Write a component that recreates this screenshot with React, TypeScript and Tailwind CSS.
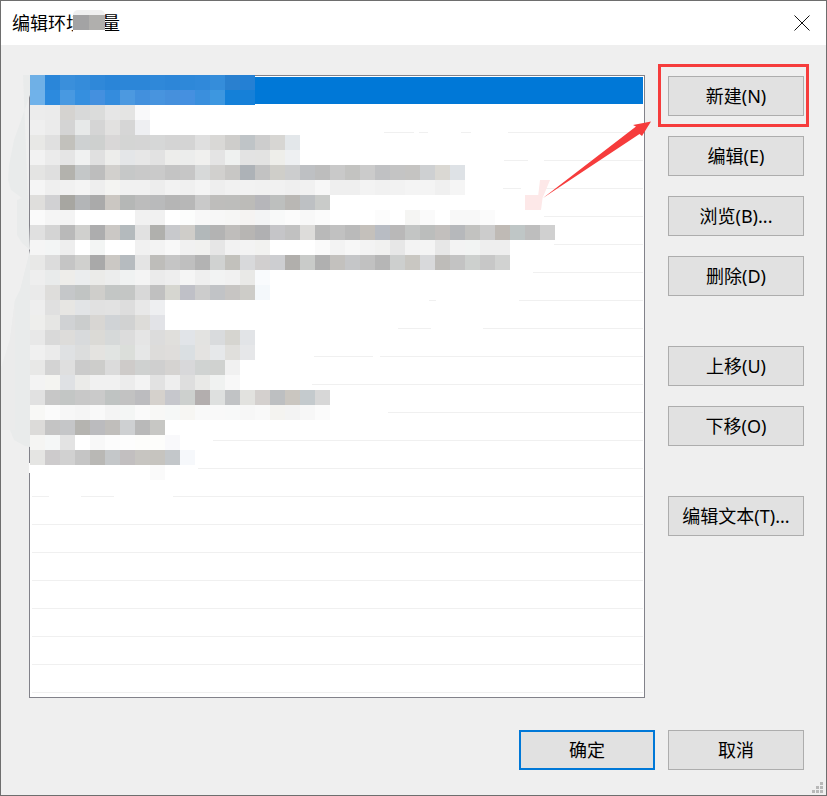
const FONT = "[font-family:'Noto_Sans','Noto_Sans_CJK_SC',sans-serif]"

// blurred-out list contents: 15px tiles starting at x=30, y=75
const mosaic: string[][] = [
  ["#6fb0e6","#2a86d9","#3a8fdb","#358cda","#2f88d9","#2a85d8","#2c86d8","#2c86d8","#2f88d9","#2d86d8","#2e88d9","#3089da","#358dda","#2a80cf","#2480d4"],
  ["#70b2ea","#2c8ade","#4899e1","#358fdf","#4490df","#348cdd","#4c99e0","#4290dd","#4894de","#4690dc","#4590e0","#3a8fdd","#3d97e0","#1480d8","#1680d8"],
  ["#ececec","#ebebeb","#d5d3d0","#d8d9d9","#dbdcdb","#e6e6e6","#e4e4e3","#f9f9fa"],
  ["#efefef","#ebebeb","#d4d4d4","#e7e9e9","#d5d5d5","#e2e1e0","#d6d6d6","#eeeff2"],
  ["#e8e8e6","#e0e0e0","#c2c1bc","#ced1d2","#ced0cf","#d9d7d7","#d4d5d4","#d5d5d5","#d6d7d7","#d4d4d4","#d4d4d4","#dfdfdf","#d9d8d6","#cecdcb","#bfc4c7","#cdcdcd","#d7d6d3","#e3e7ea"],
  ["#f2f2f2","#ebebeb","#e5e5e5","#f0f1f1","#e0e0e0","#ededeb","#e4e6e8","#e7e7e7","#e2e2e2","#ededeb","#ecedec","#f0f0ee","#e4e4e4","#eff1f0","#e3e3e3","#e3e3e2","#eeeeea","#eef0f2"],
  ["#e4e4e3","#dfdfdf","#b3b2ad","#c4c7c8","#bdbdbd","#d2d0cd","#c6c8c8","#c9c9c9","#cacaca","#c4c4c4","#c6c6c6","#d7d9d9","#d1d0ce","#c8c7c5","#adb2b7","#c2c2c2","#cfcec9","#cccdce","#bec0c3","#bdbdbd","#c9c9c9","#c3c3c1","#cbcbcb","#c0c1c3","#c4c4c4","#c5c4c2","#ced0d2","#dad8d3","#dee2e6"],
  ["#f5f5f5","#efefef","#f1f1f1","#f4f4f4","#eeeeee","#f4f4f2","#f1f1f1","#f1f1f1","#ededed","#f2f2f2","#f0f0f0","#f4f4f4","#eeeeee","#f1f1f1","#f2f2f2","#f1f1f1","#f1f1f1","#efefef","#f1f1f1","#f7f7f7","#efefef","#efefef","#f3f3f3","#f1f1f1","#f2f2f2","#f4f4f4","#f4f4f4","#f0f0f0","#f5f5f5"],
  ["#dfdedc","#d1d1d3","#a7a6a1","#b3b5b7","#aaaaaa","#cbc7c2","#b5b7b6","#bcbcbc","#b9babb","#b5b5b5","#b7b7b7","#c9c9c9","#bebdbb","#bdbdbb","#bcbbb8","#b6b6ba","#bdbfbe","#b9b7b4","#bdc0c3","#c9cbc9"],
  ["#fafafa","#f5f5f5","#f4f4f4","#ffffff","#ffffff","#ffffff","#ffffff","#f1f1f1","#f1f1f1","#ffffff","#fcfdfc","#f8f8f8","#f7f7f7","#f6f6f5","#f5f3f2","#f3f4f5","#f8f9f9","#fbfbfb","#f8f8f8","#fbfbfb","#ffffff","#ffffff","#ffffff","#fcfcfc","#ffffff","#f5f5f3","#fafafa","#ffffff","#f8f8f8","#f8f8f8","#fbfbfb"],
  ["#e0e0e0","#d4d4d4","#b9b9b9","#d0d0ce","#adadae","#cbc8c5","#b4babd","#e1e1e1","#b0b0ad","#c8c9cc","#cfcdc9","#b2b8ba","#b3b3b3","#bfbdbb","#b7b5b3","#b0b0b2","#c5c5c8","#c1c1c1","#dddcda","#b9b9b9","#c1c1c1","#bababa","#c4c0bb","#b8bcc3","#b9b8b8","#c3c5c4","#bbbdbc","#c2bfbd","#b6b8bb","#c2c2c0","#cccccc","#bfbab5","#bfc6c6","#bebebe","#d0d0d0"],
  ["#f5f5f5","#f3f5f5","#eeeeee","#ffffff","#f3f5f4","#ffffff","#ffffff","#f1f1f1","#f3f3f3","#f8f8f8","#f1f1f1","#f1f1ef","#e6e6e6","#f2f2f2","#f3f3f3","#f2f2f0","#ffffff","#ffffff","#ffffff","#fafafa","#f3f3f3","#f7f7f7","#f3f3f3","#f1f1f0","#e7e7e7","#f3f3f3","#f4f4f4","#e7e7e7","#f3f3f3","#f2f4f3","#eeeeee","#eeeeee"],
  ["#e8e8e7","#dcdcdc","#c5c5c5","#d0d0ce","#a9a9a9","#cbc8c4","#b6bbbf","#e4e4e4","#bebdba","#c5c5c5","#bfbfbf","#b3b3b3","#d0d2d1","#c2c1bc","#d8d9db","#d1cfcf","#cdced1","#b1afac","#c9cbc9","#b0b0b0","#c3c1be","#c5c6c8","#c1c1c1","#b6b6b6","#cdcfce","#c9c7c2","#d8d9db","#bebcb9","#c3c3c3","#cdd0ce","#c7c7c7","#d1d2d1"],
  ["#eeeeee","#e9ebeb","#eeedea","#ebedee","#ebebe9","#eceded","#f0f2f2","#f4f4f4","#ebebeb","#eeeeee","#f5f5f5","#efefef","#f2f3f3","#f1f1f1","#e9e9e7","#f9fbfd"],
  ["#eaeaea","#dedddb","#c5c7c9","#c1c4c3","#cfcecb","#c3c6c5","#c4c6c5","#d8d8d8","#c0c0c0","#d6d6d0","#bfc0c7","#cccccc","#c1c3c6","#c7c5c3","#cdccc8","#f4f8fb"],
  ["#eeeeee","#e0e0e0","#e7e6e3","#e2e4e6","#e1e1e1","#e2e2e2","#dddddd","#e8e8e8","#eeeff1"],
  ["#eeeeec","#e6e6e4","#d0d2d4","#cbcdcd","#d8d6d3","#d0d3d6","#d1d2d2","#dddcd9","#e2e3e7"],
  ["#e8e8e8","#d9d9d9","#dddcda","#d8dadc","#dbdad6","#d6d9d9","#dcdcdc","#e5e5e5","#dcdcdc","#e0dfdc","#e1e4e8","#e3e3e1","#d9dbdd","#d6d5d0","#e2e4e7"],
  ["#f0f0f0","#ebebeb","#dfe1e3","#dcdddd","#e4e3e0","#e1e4e2","#dbdeda","#e6e7e7","#dddcda","#dfdddb","#dadfe2","#e4e3e1","#e6e8ea","#e0dfdc","#e6e7e9"],
  ["#e8e8e7","#d3d3d3","#dfdfdf","#cbcbcb","#cdcdcb","#dbdbdb","#cecbc9","#cfd1d0","#cfcfcf","#d5d3d1","#d8d8da","#d0d3d2","#d0d2d0","#f1f1f1"],
  ["#f3f3f3","#f4f4f1","#dfe1e4","#ebebe9","#f1f1f1","#f1f1f1","#ececec","#f3f3f3","#e2e2e2","#eeeeee","#dedede","#e9e9e7","#f0f2f1","#f8f8f8"],
  ["#e1e1e1","#c7c7c7","#c3c6c5","#c8c8c8","#cacaca","#bfc3c2","#c2c2c2","#bcbcbf","#d5d1cc","#c6c7cc","#cdd0ce","#b3aeae","#dee0df","#c1c3c5","#e2e2df","#d4d0ce","#bdbfc1","#cac6c0","#c4cacd","#d7d7d7"],
  ["#f8f8f6","#fbfbfb","#f7f7f7","#f5f5f5","#f9f9f9","#f4f4f4","#f4f6f5","#fafafa","#f8f8f6","#f6f8f7","#f7f6f3","#f9f9f9","#f9f9f9","#f8f9f9","#f7f7f7","#f9f9f9","#f4f3f0","#f3f3f3","#f7f7f7","#fbfbfb"],
  ["#dcdbd9","#c4c4c4","#c5c6c8","#b5b4b0","#bbbbbe","#c0bebb","#ced0d2","#b9b9b9","#c7c7c4"],
  ["#f5f5f3","#f5f7f7","#e3e3e3","#ffffff","#f8f8f8","#fcfcfc","#fdfdfd","#fdfdfb","#fdfdfb","#f9f9fb"],
  ["#e5e5e3","#cdcbcc","#d1d1d1","#c5c5c5","#b9b8b5","#c4c7c9","#c2bfc0","#c7c5c1","#c6c4bf","#c3c7ca","#f6f8fb"],
  ["#ffffff","#ffffff","#ffffff","#ffffff","#ffffff","#ffffff","#ffffff","#ffffff","#fafafa"],
]

// visible parts of each row's separator, the rest got painted over in the screenshot
const lines: number[][][] = [
  [[383, 413], [418, 427], [460, 470], [507, 643]],
  [[503, 527], [543, 643]],
  [[502, 520], [543, 643]],
  [[543, 643]],
  [[553, 643]],
  [[532, 643]],
  [[428, 435], [518, 643]],
  [[397, 430], [482, 643]],
  [[313, 372], [379, 643]],
  [[311, 643]],
  [[387, 643]],
  [[212, 643]],
  [[197, 643]],
  [[31, 48], [80, 113], [172, 643]],
  [[31, 643]],
  [[31, 643]],
  [[31, 643]],
  [[31, 643]],
  [[31, 643]],
  [[31, 643]],
  [[31, 643]],
]

function Button({ label, focused, className }: { label: string; focused?: boolean; className?: string }) {
  return (
    <button
      className={`flex h-10 w-[136px] items-center justify-center bg-[#e1e1e1] text-[18px] text-black ${
        focused ? "border-2 border-[#0078d7]" : "border border-[#adadad]"
      } ${className ?? ""}`}
    >
      {label}
    </button>
  )
}

function ListRow({ segments, first }: { segments: number[][]; first?: boolean }) {
  let prev = 30
  return (
    <li className={`flex h-7 items-end ${first ? "mt-px" : ""}`}>
      {segments.map(([from, to]) => {
        const marginLeft = from - prev
        prev = to
        return <span key={from} className="h-px bg-[#f0f0f0]" style={{ marginLeft, width: to - from }} />
      })}
    </li>
  )
}

export default function App() {
  return (
    <div className={`relative flex h-[796px] w-[827px] flex-col overflow-hidden border border-[#6e6e6e] bg-[#efefef] ${FONT}`}>
      <header className="relative flex h-11 shrink-0 items-center justify-between bg-white pl-[11px] pr-[16px]">
        <h1 className="text-[18px] font-normal text-black">编辑环境变量</h1>
        <svg width="16" height="16" viewBox="0 0 16 16" stroke="#111" strokeWidth="1">
          <path d="M0.5 0.5 15.5 15.5M15.5 0.5 0.5 15.5" />
        </svg>
        {/* smudge over the title */}
        <div className="absolute left-[72px] top-[9px] flex w-8 flex-col bg-white pb-[4px]">
          <span className="h-[5px] rounded-t-full bg-[#f0f0f0]" />
          <div className="flex h-[15px]">
            <span className="w-4 bg-[#a3a3a4]" />
            <span className="w-4 bg-[#b0afad]" />
          </div>
        </div>
      </header>

      <div className="flex flex-1 flex-col">
        <div className="flex pl-7 pt-[30px]">
          <div className="h-[623px] w-[616px] border border-[#82828a] bg-white p-px">
            <div className="h-[27px] bg-[#0078d7]" />
            <ul>
              {lines.map((segments, i) => (
                <ListRow key={i} segments={segments} first={i === 0} />
              ))}
            </ul>
          </div>
          <div className="ml-[23px] flex flex-col gap-5 pt-px">
            <Button label="新建(N)" />
            <Button label="编辑(E)" />
            <Button label="浏览(B)..." />
            <Button label="删除(D)" />
            <Button label="上移(U)" className="mt-[30px]" />
            <Button label="下移(O)" />
            <Button label="编辑文本(T)..." className="mt-[30px]" />
          </div>
        </div>
        <div className="mt-8 flex justify-end gap-[13px] pr-[22px]">
          <Button label="确定" focused />
          <Button label="取消" />
        </div>
      </div>

      {/* annotations painted on top of the screenshot */}
      <svg className="pointer-events-none absolute -left-px -top-px" width="827" height="796" viewBox="0 0 827 796">
        <path
          d="M23 75H30V95L14 140L9 165L8 180L11 190L22 198L17 200V235L22 243L30 250V447L25 446L14 440L10 430H0V372L10 340L15 300L20 290L30 250Z"
          fill="#e9ebeb"
        />
        <path d="M0 372 10 340 15 300V430H0Z" fill="#ebebeb" />
        <rect x="29" y="463" width="1" height="10" fill="#fff" />
        <path d="M525 195H543L541 210H525Z M540 180H550L543 197H538Z" fill="#fde8e8" />
        <path d="M543 198 636 126.5 633 125 651 121.5 642 136 639.5 134Z" fill="#f63c3c" />
        <g fill="#b8b8b8">
          <rect x="820" y="782" width="3" height="3" />
          <rect x="816" y="786" width="3" height="3" />
          <rect x="820" y="786" width="3" height="3" />
          <rect x="812" y="790" width="3" height="3" />
          <rect x="816" y="790" width="3" height="3" />
          <rect x="820" y="790" width="3" height="3" />
        </g>
      </svg>
      <div className="absolute left-[657px] top-[63px] h-[63px] w-[151px] border-[3px] border-[#f63c3c]" />
      <div className="absolute left-[29px] top-[74px]">
        {mosaic.map((row, y) => (
          <div key={y} className="flex h-[15px]">
            {row.map((color, x) => (
              <span key={x} className="h-[15px] w-[15px]" style={{ backgroundColor: color }} />
            ))}
          </div>
        ))}
      </div>
    </div>
  )
}
